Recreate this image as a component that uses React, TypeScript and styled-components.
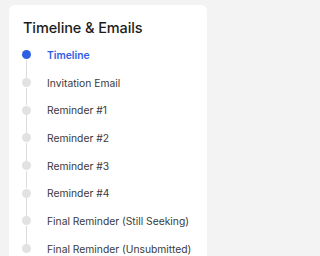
import React from "react";
import styled, { createGlobalStyle } from "styled-components";

const GlobalStyle = createGlobalStyle`
  html, body {
    margin: 0;
    padding: 0;
    background: #f3f3f3;
  }
  body {
    font-family: Inter, "Noto Sans", Arial, sans-serif;
    -webkit-font-smoothing: antialiased;
  }
`;

const steps = [
  "Timeline",
  "Invitation Email",
  "Reminder #1",
  "Reminder #2",
  "Reminder #3",
  "Reminder #4",
  "Final Reminder (Still Seeking)",
  "Final Reminder (Unsubmitted)",
];

export default function App() {
  const active = 0;

  return (
    <>
      <GlobalStyle />
      <Page>
        <Card>
          <Title>Timeline &amp; Emails</Title>
          <StepList>
            {steps.map((label, i) => (
              <Step key={label} $last={i === steps.length - 1}>
                <Dot $active={i === active} />
                <Label $active={i === active}>{label}</Label>
              </Step>
            ))}
          </StepList>
        </Card>
      </Page>
    </>
  );
}

const Page = styled.div`
  width: 212px;
  padding: 5px 5px 0 9px;
  height: 256px;
  box-sizing: border-box;
  overflow: hidden;
`;

const Card = styled.div`
  width: 198px;
  background: #ffffff;
  border-radius: 6px;
  padding: 13px 10px 20px 14px;
  min-height: 260px;
  box-sizing: border-box;
`;

const Title = styled.h2`
  margin: 0;
  font-size: 14.5px;
  line-height: 20px;
  font-weight: 500;
  color: #1c1c1c;
  letter-spacing: -0.1px;
`;

const StepList = styled.ul`
  list-style: none;
  margin: 3px 0 0 -1px;
  padding: 0;
`;

const Step = styled.li<{ $last: boolean }>`
  position: relative;
  display: flex;
  align-items: center;
  height: 27.7px;

  &::after {
    content: "";
    display: ${(p) => (p.$last ? "none" : "block")};
    position: absolute;
    left: 4px;
    width: 1px;
    top: calc(50% + 5px);
    height: calc(100% - 10px);
    background: #dcdcdc;
  }
`;

const Dot = styled.span<{ $active: boolean }>`
  flex: none;
  width: 9px;
  height: 9px;
  border-radius: 50%;
  background: ${(p) => (p.$active ? "#2f5fe3" : "#e2e2e2")};
`;

const Label = styled.span<{ $active: boolean }>`
  margin-left: 16px;
  font-size: 10.3px;
  line-height: 14px;
  font-weight: ${(p) => (p.$active ? 600 : 400)};
  color: ${(p) => (p.$active ? "#2f5fe3" : "#3a3a3a")};
  white-space: nowrap;
`;
